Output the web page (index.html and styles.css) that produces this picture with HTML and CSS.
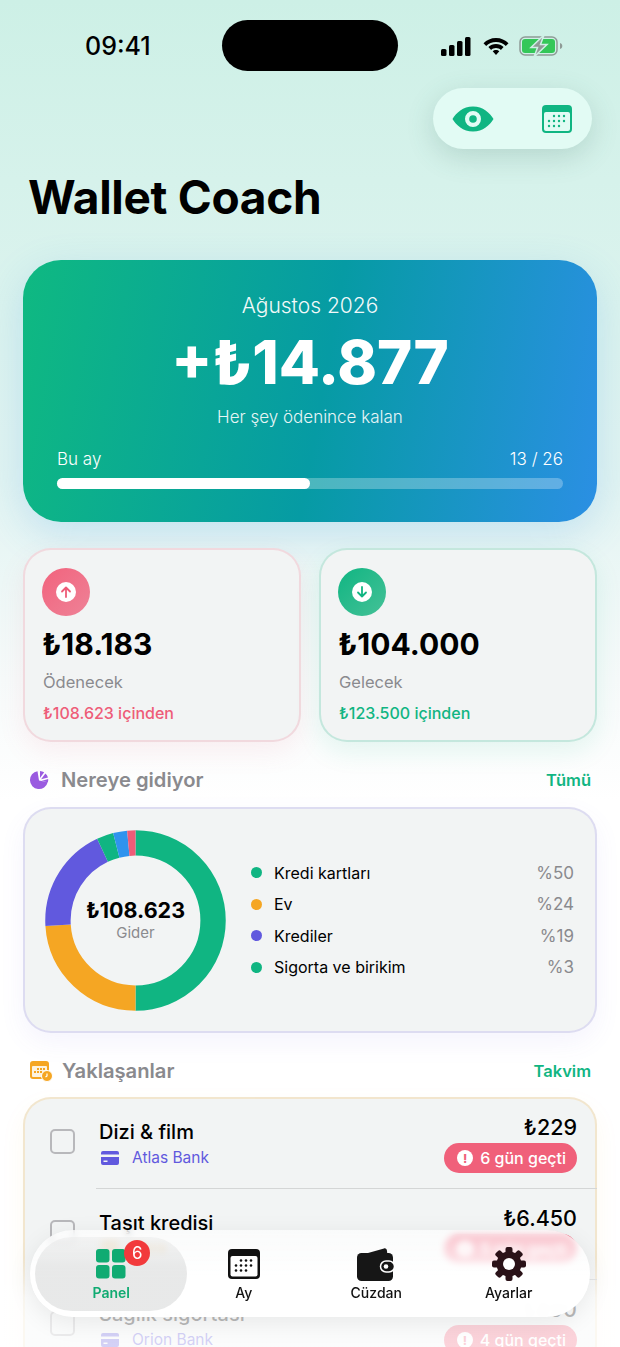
FILE: index.html
```html
<!DOCTYPE html>
<html lang="tr">
<head>
  <meta charset="UTF-8" />
  <meta name="viewport" content="width=device-width, initial-scale=1" />
  <title>Wallet Coach</title>
  <link rel="stylesheet" href="styles.css">
</head>
<body>
  <div class="phone">

    <!-- Status bar -->
    <header class="status-bar">
      <span class="status-time">09:41</span>
      <div class="island"></div>
      <div class="status-icons">
        <svg width="33" height="20" viewBox="0 0 33 20"><rect x="1" y="13" width="5.5" height="7" rx="1.5"/><rect x="9" y="9" width="5.5" height="11" rx="1.5"/><rect x="17" y="5" width="5.5" height="15" rx="1.5"/><rect x="25" y="1" width="5.5" height="19" rx="1.5"/></svg>
        <svg width="28" height="20" viewBox="0 0 28 20"><path d="M14 2C9 2 4.700 4 1.500 7.200l2.700 2.800C6.700 7.500 10.200 6 14 6s7.300 1.500 9.800 4l2.700-2.800C23.300 4 19 2 14 2z"/><path d="M14 8c-3 0-5.600 1.200-7.600 3.100l2.700 2.800C10.400 12.700 12.100 12 14 12s3.600.7 4.900 1.900l2.700-2.800C19.600 9.200 17 8 14 8z"/><path d="M14 14c-1.300 0-2.400.5-3.300 1.300L14 19l3.300-3.700c-.9-.8-2-1.300-3.300-1.300z"/></svg>
        <svg width="44" height="22" viewBox="0 0 44 22"><rect x="1" y="2" width="37" height="18" rx="5" fill="none" stroke="#8f9a96" stroke-width="1.500"/><rect x="3" y="4" width="33" height="14" rx="3" fill="#34c759"/><path d="M41 8c1.500.4 2.300 1.500 2.300 3s-.8 2.600-2.300 3z" fill="#8f9a96"/><path d="M25 0 12 12.500h6.500L15 22l13-12.500h-6.500z" fill="#8f9a96" stroke="#cfefe6" stroke-width="1.500"/></svg>
      </div>
    </header>

    <main class="content">
      <div class="top-actions">
        <svg width="42" height="26" viewBox="0 0 42 26"><path fill-rule="evenodd" fill="#10b582" d="M21 .5C11 .5 4 7 .5 13 4 19 11 25.500 21 25.500S38 19 41.500 13C38 7 31 .5 21 .5zm0 4.500a8 8 0 1 1 0 16 8 8 0 0 1 0-16z"/><circle cx="21" cy="13" r="3.800" fill="#10b582"/></svg>
        <svg width="30" height="28" viewBox="0 0 30 28"><rect width="30" height="28" rx="4" fill="#10b582"/><rect x="2" y="7" width="26" height="19" rx="2" fill="#e2fbf4"/><g fill="#10b582"><circle cx="12" cy="11" r="1.200"/><circle cx="17" cy="11" r="1.200"/><circle cx="22" cy="11" r="1.200"/><circle cx="7" cy="16" r="1.200"/><circle cx="12" cy="16" r="1.200"/><circle cx="17" cy="16" r="1.200"/><circle cx="22" cy="16" r="1.200"/><circle cx="7" cy="21" r="1.200"/><circle cx="12" cy="21" r="1.200"/><circle cx="17" cy="21" r="1.200"/></g></svg>
      </div>

      <h1 class="page-title">Wallet Coach</h1>

      <!-- Month summary -->
      <section class="hero-card">
        <p class="hero-month">Ağustos 2026</p>
        <p class="hero-amount">+₺14.877</p>
        <p class="hero-note">Her şey ödenince kalan</p>
        <div class="hero-progress-labels">
          <span>Bu ay</span>
          <span>13 / 26</span>
        </div>
        <div class="hero-track"><div class="hero-fill"></div></div>
      </section>

      <!-- Stats -->
      <section class="stat-grid">
        <div class="stat-card stat-out">
          <div class="stat-icon">
            <span class="stat-icon-dot">
              <svg width="12" height="12" viewBox="0 0 12 12"><path d="M6 11V1.500M2 5.500l4-4 4 4" fill="none" stroke="currentColor" stroke-width="1.800" stroke-linecap="round" stroke-linejoin="round"/></svg>
            </span>
          </div>
          <div class="stat-value">₺18.183</div>
          <div class="stat-label">Ödenecek</div>
          <div class="stat-sub">₺108.623 içinden</div>
        </div>
        <div class="stat-card stat-in">
          <div class="stat-icon">
            <span class="stat-icon-dot">
              <svg width="12" height="12" viewBox="0 0 12 12"><path d="M6 1v9.500M2 6.500l4 4 4-4" fill="none" stroke="currentColor" stroke-width="1.800" stroke-linecap="round" stroke-linejoin="round"/></svg>
            </span>
          </div>
          <div class="stat-value">₺104.000</div>
          <div class="stat-label">Gelecek</div>
          <div class="stat-sub">₺123.500 içinden</div>
        </div>
      </section>

      <!-- Where it goes -->
      <div class="section-head">
        <svg width="20" height="20" viewBox="0 0 20 20"><path fill="#9a5be0" d="M8.500 1.200A9 9 0 1 0 18.700 12.200L10 10.400z"/><path fill="#9a5be0" d="M11 .9v7.200l4.200-5.800A9 9 0 0 0 11 .9zM16.400 3.400l-4.300 5.900 6.900-1.900a9 9 0 0 0-2.600-4zM19.200 9.100l-7 1.800 6.700 1.400a9 9 0 0 0 .3-3.200z"/></svg>
        <h2 class="section-title">Nereye gidiyor</h2>
        <a class="section-link" href="#">Tümü</a>
      </div>

      <section class="chart-card">
        <div class="donut">
          <svg width="181" height="181" viewBox="0 0 182 182">
            <g fill="none" stroke-width="25.500" transform="rotate(-90 91 91)">
              <circle cx="91" cy="91" r="78" pathLength="100" stroke="#10b582" stroke-dasharray="50 50"/>
              <circle cx="91" cy="91" r="78" pathLength="100" stroke="#f5a623" stroke-dasharray="24 76" stroke-dashoffset="-50"/>
              <circle cx="91" cy="91" r="78" pathLength="100" stroke="#6159de" stroke-dasharray="19 81" stroke-dashoffset="-74"/>
              <circle cx="91" cy="91" r="78" pathLength="100" stroke="#10b582" stroke-dasharray="3 97" stroke-dashoffset="-93"/>
              <circle cx="91" cy="91" r="78" pathLength="100" stroke="#2f93ee" stroke-dasharray="2.500 97.500" stroke-dashoffset="-96"/>
              <circle cx="91" cy="91" r="78" pathLength="100" stroke="#ee5c78" stroke-dasharray="1.500 98.500" stroke-dashoffset="-98.500"/>
            </g>
          </svg>
          <div class="donut-center">
            <strong>₺108.623</strong>
            <span>Gider</span>
          </div>
        </div>
        <ul class="legend">
          <li><i class="dot dot-green"></i><span>Kredi kartları</span><em>%50</em></li>
          <li><i class="dot dot-orange"></i><span>Ev</span><em>%24</em></li>
          <li><i class="dot dot-purple"></i><span>Krediler</span><em>%19</em></li>
          <li><i class="dot dot-green"></i><span>Sigorta ve birikim</span><em>%3</em></li>
        </ul>
      </section>

      <!-- Upcoming -->
      <div class="section-head section-head-upcoming">
        <svg width="24" height="22" viewBox="0 0 24 22"><rect x="1" y="1" width="19" height="18" rx="3" fill="#f5a623"/><rect x="3" y="6" width="15" height="11" rx="1" fill="#fdf3df"/><g fill="#f5a623"><rect x="8" y="8" width="2" height="2"/><rect x="11" y="8" width="2" height="2"/><rect x="14" y="8" width="2" height="2"/><rect x="5" y="11" width="2" height="2"/><rect x="8" y="11" width="2" height="2"/><rect x="11" y="11" width="2" height="2"/></g><circle cx="18" cy="16" r="5.500" fill="#f5a623" stroke="#fff"/><path d="M18 13.500V16l-1.500 1" fill="none" stroke="#fff" stroke-width="1.200"/></svg>
        <h2 class="section-title">Yaklaşanlar</h2>
        <a class="section-link" href="#">Takvim</a>
      </div>

      <section class="list-card">
        <div class="bill-row">
          <span class="check"></span>
          <div class="bill-info">
            <div class="bill-name">Dizi &amp; film</div>
            <div class="bill-bank bank-purple">
              <svg width="18" height="14" viewBox="0 0 18 14"><path fill="currentColor" d="M2 0h14a2 2 0 0 1 2 2v1.500H0V2a2 2 0 0 1 2-2zM0 6h18v6a2 2 0 0 1-2 2H2a2 2 0 0 1-2-2zm2.500 3.500V11h4V9.500z"/></svg>
              <span>Atlas Bank</span>
            </div>
          </div>
          <div class="bill-side">
            <div class="bill-amount">₺229</div>
            <div class="late-badge"><i class="late-icon">!</i>6 gün geçti</div>
          </div>
        </div>
        <div class="bill-row">
          <span class="check"></span>
          <div class="bill-info">
            <div class="bill-name">Taşıt kredisi</div>
            <div class="bill-bank bank-amber">
              <svg width="18" height="14" viewBox="0 0 18 14"><path fill="currentColor" d="M2 0h14a2 2 0 0 1 2 2v1.500H0V2a2 2 0 0 1 2-2zM0 6h18v6a2 2 0 0 1-2 2H2a2 2 0 0 1-2-2zm2.500 3.500V11h4V9.500z"/></svg>
              <span>Vera</span>
            </div>
          </div>
          <div class="bill-side">
            <div class="bill-amount">₺6.450</div>
            <div class="late-badge"><i class="late-icon">!</i>5 gün geçti</div>
          </div>
        </div>
        <div class="bill-row">
          <span class="check"></span>
          <div class="bill-info">
            <div class="bill-name">Sağlık sigortası</div>
            <div class="bill-bank bank-purple">
              <svg width="18" height="14" viewBox="0 0 18 14"><path fill="currentColor" d="M2 0h14a2 2 0 0 1 2 2v1.500H0V2a2 2 0 0 1 2-2zM0 6h18v6a2 2 0 0 1-2 2H2a2 2 0 0 1-2-2zm2.500 3.500V11h4V9.500z"/></svg>
              <span>Orion Bank</span>
            </div>
          </div>
          <div class="bill-side">
            <div class="bill-amount">₺890</div>
            <div class="late-badge"><i class="late-icon">!</i>4 gün geçti</div>
          </div>
        </div>
      </section>
    </main>

    <div class="bottom-fade"></div>

    <!-- Tab bar -->
    <nav class="tab-bar" aria-label="Primary Navigation">
      <a class="tab tab-active" href="#">
        <span class="tab-icon">
          <svg width="30" height="30" viewBox="0 0 30 30" fill="#10ab72"><rect width="13.500" height="13.500" rx="3"/><rect x="16" width="13.500" height="13.500" rx="3"/><rect y="16" width="13.500" height="13.500" rx="3"/><rect x="16" y="16" width="13.500" height="13.500" rx="3"/></svg>
          <b class="tab-badge">6</b>
        </span>
        <span>Panel</span>
      </a>
      <a class="tab" href="#">
        <span class="tab-icon">
          <svg width="32" height="30" viewBox="0 0 32 30"><rect width="32" height="30" rx="4" fill="#111"/><rect x="2.500" y="7" width="27" height="20.500" rx="2" fill="#fff"/><g fill="#111"><circle cx="13" cy="11.500" r="1.300"/><circle cx="18" cy="11.500" r="1.300"/><circle cx="23" cy="11.500" r="1.300"/><circle cx="8" cy="16.500" r="1.300"/><circle cx="13" cy="16.500" r="1.300"/><circle cx="18" cy="16.500" r="1.300"/><circle cx="23" cy="16.500" r="1.300"/><circle cx="8" cy="21.500" r="1.300"/><circle cx="13" cy="21.500" r="1.300"/><circle cx="18" cy="21.500" r="1.300"/></g></svg>
        </span>
        <span>Ay</span>
      </a>
      <a class="tab" href="#">
        <span class="tab-icon">
          <svg width="38" height="33" viewBox="0 0 38 33"><path fill="#161616" d="M11 5 27 .4c1.600-.4 2.800.6 3 2.600l.2 2z"/><rect y="5" width="36" height="28" rx="4.500" fill="#161616"/><rect x="23.500" y="13" width="14" height="11" rx="5.500" fill="#161616" stroke="#fff" stroke-width="1.500"/><circle cx="29" cy="18.500" r="2.300" fill="#fff"/></svg>
        </span>
        <span>Cüzdan</span>
      </a>
      <a class="tab" href="#">
        <span class="tab-icon">
          <svg width="34" height="34" viewBox="0 0 34 34"><g fill="#2a1218"><circle cx="17" cy="17" r="12.500"/><rect x="13.500" width="7" height="34" rx="2"/><rect x="13.500" width="7" height="34" rx="2" transform="rotate(45 17 17)"/><rect x="13.500" width="7" height="34" rx="2" transform="rotate(90 17 17)"/><rect x="13.500" width="7" height="34" rx="2" transform="rotate(135 17 17)"/></g><circle cx="17" cy="17" r="6" fill="#fff"/></svg>
        </span>
        <span>Ayarlar</span>
      </a>
    </nav>
  </div>
</body>
</html>
```

FILE: styles.css
```css
/* Base and body */
* {
  box-sizing: border-box;
}

body {
  margin: 0;
  font-family: 'Inter', 'Liberation Sans', sans-serif;
  color: #000;
}

.phone {
  position: relative;
  width: 620px;
  height: 1347px;
  overflow: hidden;
  background: linear-gradient(180deg, #cdf0e6 0, #d6f2eb 180px, #e2f4f2 480px, #f6fafa 680px, #fff 800px);
}

/* Status bar */
.status-bar {
  display: flex;
  justify-content: space-between;
  align-items: center;
  height: 88px;
  padding: 0 57px 0 85px;
}

.status-time {
  font-size: 25px;
  font-weight: 500;
  margin-top: 4px;
}

.island {
  position: absolute;
  top: 20px;
  left: 222px;
  width: 176px;
  height: 51px;
  border-radius: 26px;
  background: #000;
}

.status-icons {
  display: flex;
  align-items: center;
  gap: 9px;
  margin-top: 4px;
}

/* Page head */
.content {
  padding: 0 23px;
}

.top-actions {
  display: flex;
  justify-content: space-between;
  align-items: center;
  width: 159px;
  height: 61px;
  margin-left: auto;
  margin-right: 5px;
  padding: 0 20px 0 19px;
  border-radius: 31px;
  background: #e2fbf4;
  box-shadow: 0 8px 28px rgba(60, 110, 95, 0.2);
}

.page-title {
  margin: 20px 0 0 5px;
  font-size: 46px;
  line-height: 56px;
  font-weight: 700;
  letter-spacing: -0.3px;
}

/* Hero card */
.hero-card {
  margin-top: 35px;
  height: 262px;
  padding: 32px 34px 0;
  border-radius: 38px;
  color: #fff;
  text-align: center;
  background: linear-gradient(100deg, #0fb981 0%, #069ba4 52%, #2b8fe4 100%);
  box-shadow: 0 12px 40px rgba(50, 150, 225, 0.2);
}

.hero-card p {
  margin: 0;
}

.hero-month {
  font-size: 21px;
  line-height: 28px;
  font-weight: 300;
  opacity: 0.95;
}

.hero-card .hero-amount {
  margin-top: 7px;
  font-size: 60px;
  line-height: 70px;
  font-weight: 800;
}

.hero-card .hero-note {
  margin-top: 8px;
  font-size: 17px;
  line-height: 24px;
  font-weight: 300;
  opacity: 0.9;
}

.hero-progress-labels {
  display: flex;
  justify-content: space-between;
  margin-top: 18px;
  font-size: 17px;
  line-height: 24px;
  font-weight: 300;
}

.hero-track {
  height: 11px;
  margin-top: 7px;
  border-radius: 6px;
  background: rgba(255, 255, 255, 0.28);
}

.hero-fill {
  width: 50%;
  height: 100%;
  border-radius: 6px;
  background: #fff;
}

/* Stat cards */
.stat-grid {
  display: grid;
  grid-template-columns: 1fr 1fr;
  gap: 18px;
  margin-top: 26px;
}

.stat-card {
  height: 194px;
  padding: 18px 17px 0;
  border: 2px solid;
  border-radius: 28px;
  background: #f2f4f4;
}

.stat-out {
  border-color: rgba(240, 110, 135, 0.2);
  box-shadow: 0 10px 26px rgba(240, 110, 135, 0.1);
}

.stat-in {
  border-color: rgba(16, 181, 130, 0.2);
  box-shadow: 0 10px 26px rgba(16, 181, 130, 0.1);
}

.stat-icon {
  display: flex;
  align-items: center;
  justify-content: center;
  width: 48px;
  height: 48px;
  border-radius: 50%;
}

.stat-out .stat-icon {
  color: #ee5c78;
  background: linear-gradient(135deg, #f2637d, #ee8297);
}

.stat-in .stat-icon {
  color: #10b582;
  background: linear-gradient(135deg, #10b582, #45c197);
}

.stat-icon-dot {
  display: flex;
  align-items: center;
  justify-content: center;
  width: 20px;
  height: 20px;
  border-radius: 50%;
  background: #fff;
}

.stat-value {
  margin-top: 8px;
  font-size: 30px;
  line-height: 40px;
  font-weight: 700;
}

.stat-label {
  margin-top: 6px;
  padding-left: 1px;
  font-size: 16.500px;
  line-height: 24px;
  color: #8a8a8e;
}

.stat-sub {
  margin-top: 7px;
  padding-left: 1px;
  font-size: 16px;
  line-height: 24px;
  font-weight: 500;
}

.stat-out .stat-sub {
  color: #ee5c78;
}

.stat-in .stat-sub {
  color: #10b582;
}

/* Section headers */
.section-head {
  display: flex;
  align-items: center;
  gap: 12px;
  height: 28px;
  margin-top: 24px;
  padding: 0 6px;
}

.section-head-upcoming {
  gap: 9px;
}

.section-title {
  flex: 1;
  margin: -1px 0 0;
  font-size: 20.200px;
  font-weight: 600;
  color: #8a8a8e;
}

.section-link {
  font-size: 16.500px;
  font-weight: 600;
  color: #10b582;
  text-decoration: none;
}

/* Donut card */
.chart-card {
  display: flex;
  align-items: center;
  height: 226px;
  margin-top: 13px;
  padding: 0 21px 0 20px;
  border: 2px solid rgba(120, 100, 225, 0.17);
  border-radius: 28px;
  background: #f2f4f4;
  box-shadow: 0 10px 26px rgba(120, 100, 225, 0.07);
}

.donut {
  position: relative;
  width: 181px;
  height: 181px;
  flex: none;
}

.donut svg {
  display: block;
}

.donut-center {
  position: absolute;
  inset: 0;
  display: flex;
  flex-direction: column;
  align-items: center;
  justify-content: center;
}

.donut-center strong {
  font-size: 21.500px;
  line-height: 26px;
  font-weight: 700;
}

.donut-center span {
  font-size: 15px;
  line-height: 20px;
  color: #8a8a8e;
}

.legend {
  flex: 1;
  list-style: none;
  margin: 0 0 0 25px;
  padding: 0;
  display: flex;
  flex-direction: column;
  gap: 7px;
}

.legend li {
  display: flex;
  align-items: center;
  height: 24.500px;
  font-size: 16px;
}

.legend span {
  flex: 1;
}

.legend em {
  font-style: normal;
  font-size: 17px;
  color: #8a8a8e;
}

.dot {
  width: 11px;
  height: 11px;
  margin-right: 12px;
  border-radius: 50%;
}

.dot-green {
  background: #10b582;
}

.dot-orange {
  background: #f5a623;
}

.dot-purple {
  background: #6159de;
}

/* Upcoming list */
.list-card {
  margin-top: 12px;
  border: 2px solid rgba(245, 166, 35, 0.18);
  border-bottom: 0;
  border-radius: 28px;
  background: #f2f4f4;
  box-shadow: 0 10px 26px rgba(245, 166, 35, 0.06);
}

.bill-row {
  display: flex;
  align-items: flex-start;
  height: 91px;
  padding: 15px 18px 0 25px;
}

.check {
  flex: none;
  width: 25px;
  height: 25px;
  margin-top: 15px;
  border: 2px solid #b8b8bb;
  border-radius: 5px;
}

.bill-info {
  flex: 1;
  margin-left: 24px;
  height: 75px;
}

.bill-name {
  margin-top: 4px;
  font-size: 20px;
  line-height: 28px;
  font-weight: 500;
}

.bill-bank {
  display: flex;
  align-items: center;
  gap: 13px;
  margin-top: 1px;
  padding-left: 2px;
  font-size: 15.500px;
  line-height: 22px;
}

.bank-purple {
  color: #6159de;
}

.bank-amber {
  color: #f5a623;
  font-weight: 600;
}

.bill-side {
  display: flex;
  flex-direction: column;
  align-items: flex-end;
}

.bill-amount {
  font-size: 21.500px;
  line-height: 26px;
  font-weight: 500;
}

.late-badge {
  display: flex;
  align-items: center;
  gap: 7px;
  height: 30px;
  margin-top: 3px;
  padding: 0 11px 0 13px;
  border-radius: 15px;
  font-size: 16px;
  font-weight: 500;
  color: #fff;
  background: #f0607a;
}

.late-icon {
  display: flex;
  align-items: center;
  justify-content: center;
  width: 16px;
  height: 16px;
  border-radius: 50%;
  font-size: 12px;
  font-style: normal;
  font-weight: 800;
  color: #f0607a;
  background: #fff;
}

.bill-row + .bill-row {
  position: relative;
}

.bill-row + .bill-row::before {
  content: '';
  position: absolute;
  top: -2px;
  left: 71px;
  right: -2px;
  height: 1px;
  background: #d4d6d6;
}

/* Tab bar */
.bottom-fade {
  position: absolute;
  left: 0;
  right: 0;
  bottom: 0;
  height: 90px;
  background: linear-gradient(180deg, rgba(255, 255, 255, 0) 0, rgba(255, 255, 255, 0.72) 45%, rgba(255, 255, 255, 0.72) 100%);
}

.tab-bar {
  position: absolute;
  left: 30px;
  top: 1230px;
  display: flex;
  width: 560px;
  height: 87px;
  padding-left: 15px;
  border-radius: 44px;
  background: linear-gradient(180deg, rgba(255, 255, 255, 0.62) 0, rgba(255, 255, 255, 0.78) 30%, rgba(255, 255, 255, 0.97) 55%);
  -webkit-backdrop-filter: blur(3px);
  backdrop-filter: blur(3px);
  box-shadow: 0 6px 24px rgba(0, 0, 0, 0.08);
}

.tab {
  position: relative;
  display: flex;
  flex-direction: column;
  align-items: center;
  width: 132.500px;
  padding-top: 17px;
  font-size: 14px;
  line-height: 18px;
  font-weight: 500;
  color: #111;
  text-decoration: none;
}

.tab-active {
  color: #10ab72;
  font-weight: 600;
}

.tab-active::before {
  content: '';
  position: absolute;
  top: 7px;
  bottom: 6px;
  left: -10px;
  right: -9px;
  border-radius: 37px;
  background: linear-gradient(180deg, rgba(225, 226, 226, 0.35) 0, rgba(228, 229, 229, 0.85) 40%);
}

.tab-icon {
  position: relative;
  display: flex;
  align-items: center;
  justify-content: center;
  height: 34px;
  margin-bottom: 3px;
}

.tab-badge {
  position: absolute;
  top: -7px;
  left: 28px;
  width: 26px;
  height: 26px;
  border-radius: 50%;
  font-size: 17px;
  line-height: 26px;
  font-weight: 400;
  text-align: center;
  color: #fff;
  background: #f23a3c;
}

.tab > span:last-child {
  position: relative;
}
```
